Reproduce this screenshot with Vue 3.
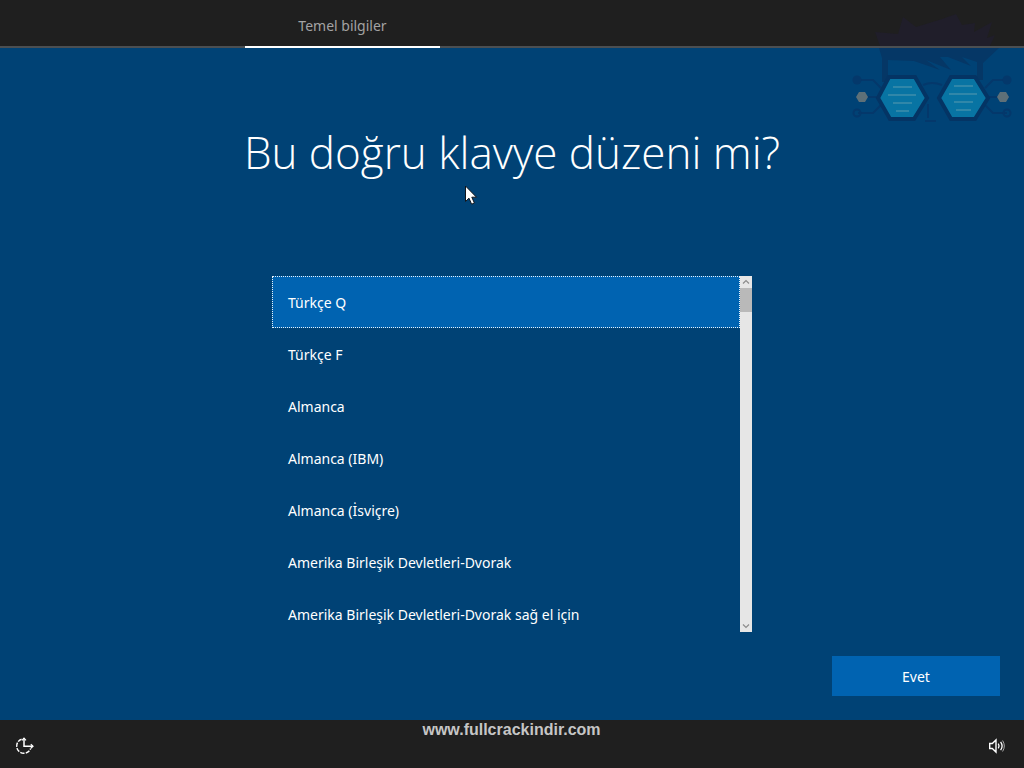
<script setup>
import { ref } from 'vue'

const layouts = [
  'Türkçe Q',
  'Türkçe F',
  'Almanca',
  'Almanca (IBM)',
  'Almanca (İsviçre)',
  'Amerika Birleşik Devletleri-Dvorak',
  'Amerika Birleşik Devletleri-Dvorak sağ el için',
]
const selected = ref(0)
</script>

<template>
  <div class="setup">
    <header class="topbar">
      <div class="tab">Temel bilgiler</div>
    </header>

    <main class="content">
      <h1>Bu doğru klavye düzeni mi?</h1>

      <div class="picker">
        <div class="options" role="listbox" aria-label="Klavye düzeni">
          <button
            v-for="(name, i) in layouts"
            :key="name"
            type="button"
            role="option"
            class="option"
            :class="{ selected: i === selected }"
            :aria-selected="i === selected"
            @click="selected = i"
          >{{ name }}</button>
        </div>
        <div class="scrollbar">
          <button type="button" class="arrow" aria-label="Yukarı kaydır">
            <svg width="8" height="6" viewBox="0 0 8 6"><path d="M1 4.5 4 1.5 7 4.5" /></svg>
          </button>
          <div class="thumb"></div>
          <button type="button" class="arrow end" aria-label="Aşağı kaydır">
            <svg width="8" height="6" viewBox="0 0 8 6"><path d="M1 1.5 4 4.5 7 1.5" /></svg>
          </button>
        </div>
      </div>

      <div class="actions">
        <button type="button" class="primary">Evet</button>
      </div>
    </main>

    <footer class="bottombar">
      <button type="button" class="icon" aria-label="Erişim kolaylığı">
        <svg width="20" height="20" viewBox="0 0 20 20" fill="none" stroke="#fff" stroke-width="1.5">
          <path d="M6.6 3.2A7.2 7.2 0 1 0 15.6 12.6" stroke-dasharray="4.2 1.3" />
          <path d="M9 2v8.2h9" />
          <path d="M7 4.4 9 2.2l2 2.2M15.8 8.2l2.2 2-2.2 2" stroke-width="1.2" />
        </svg>
      </button>
      <span class="site">www.fullcrackindir.com</span>
      <button type="button" class="icon" aria-label="Ses düzeyi">
        <svg width="18" height="16" viewBox="0 0 18 16" fill="none" stroke="#fff" stroke-width="1.4">
          <path d="M1.7 5.5h2.6L8 2v12l-3.7-3.5H1.7z" />
          <path d="M10.3 5.6q1.5 2.4 0 4.8M12.6 3.800q3 4.200 0 8.400" stroke-width="1.3" />
          <path d="M14.600 2.500q3.400 5.500 0 11" stroke="#aaa" stroke-width="1" />
        </svg>
      </button>
    </footer>

    <svg class="logo" width="180" height="130" viewBox="0 0 180 130" aria-hidden="true">
      <path fill="#201e2a" d="M36 46 31 32 54 34 59 17 72 27 98 19 112 14 118 25 131 23 130 32 148 22 143 38 151 35 146 46z" />
      <path fill="#053766" d="M35 48H155L139 63V80H133V62L118 57 127 66 104 57 96 57 107 70 82 60 96 70 70 61 44 60V82H38V58z" />
      <g fill="none" stroke="#04386b" stroke-width="2">
        <path d="M14 80H29L37 88M24 97H35M14 113H29L37 105M163 80H149L141 88M155 97H142M163 113H149L141 105" />
        <path d="M79 85Q88 81 98 85M84 104V118M92 121H81" />
        <circle cx="13" cy="113" r="3.5" />
        <circle cx="163" cy="113" r="3.5" />
      </g>
      <g fill="#04386b">
        <circle cx="13" cy="80" r="4.5" />
        <circle cx="163" cy="80" r="4.5" />
      </g>
      <g fill="#0874a3" stroke="#043464" stroke-width="4">
        <path d="M45 77H71L83 98 70 119H46L34 98z" />
        <path d="M107 77H131L144 98 131 119H107L95 98z" />
      </g>
      <g stroke="#3e8dac" stroke-width="1.5">
        <path d="M49 87H68M44 95H72M49 103H68M52 111H65M110 86H129M105 94H133M110 102H129M112 110H127" />
      </g>
      <g fill="#5e7078">
        <path d="M15 92h6l3 5-3 5h-6l-3-5zM156 92h6l3 5-3 5h-6l-3-5z" />
      </g>
    </svg>

    <svg class="cursor" width="15" height="22" viewBox="0 0 15 22" aria-hidden="true">
      <path d="M1.5 1V16.5L5 13.2 7.6 19.2 10.4 18 7.8 12.2H12.5z" fill="#fff" stroke="#10151c" stroke-width="1" />
    </svg>
  </div>
</template>

<style>
body {
  background: #004275;
}
</style>

<style scoped>
.setup {
  position: relative;
  display: flex;
  flex-direction: column;
  min-height: 100vh;
  background: #004275;
  color: #fff;
  font-family: "Noto Sans", "Open Sans", sans-serif;
  font-size: 14px;
  line-height: 20px;
}

button {
  margin: 0;
  border: 0;
  border-radius: 0;
  padding: 0;
  background: none;
  color: inherit;
  font: inherit;
}

.topbar {
  display: flex;
  height: 48px;
  box-sizing: border-box;
  padding-left: 245px;
  background: linear-gradient(#4b4f52, #4b4f52) bottom / 100% 2px no-repeat #1f1f1f;
}

.tab {
  box-sizing: border-box;
  width: 195px;
  padding-top: 16px;
  border-bottom: 2px solid #fff;
  color: #a3a3a3;
  text-align: center;
}

.content {
  flex: 1;
  display: flex;
  flex-direction: column;
  align-items: center;
}

h1 {
  margin: 72px 0 92px;
  font-family: "Open Sans", sans-serif;
  font-size: 44px;
  font-weight: 300;
  line-height: 64px;
}

.picker {
  display: flex;
  width: 480px;
  max-width: 100%;
  height: 356px;
}

.options {
  flex: 1;
  overflow: hidden;
}

.option {
  display: block;
  box-sizing: border-box;
  width: 100%;
  height: 52px;
  padding: 2px 15px 0;
  border: 1px solid transparent;
  text-align: left;
}

.option.selected {
  border: 1px dotted #e8f2fa;
  background: #0063b1;
}

.scrollbar {
  display: flex;
  flex-direction: column;
  width: 12px;
  background: #e6e6e6;
}

.arrow {
  display: flex;
  align-items: center;
  justify-content: center;
  height: 12px;
}

.arrow path {
  fill: none;
  stroke: #8c8c8c;
  stroke-width: 1.2;
}

.arrow.end {
  margin-top: auto;
}

.thumb {
  height: 24px;
  background: #b9b9b9;
}

.actions {
  align-self: stretch;
  display: flex;
  justify-content: flex-end;
  padding: 24px;
}

.primary {
  width: 168px;
  height: 40px;
  padding-top: 2px;
  background: #0063b1;
}

.bottombar {
  display: flex;
  align-items: center;
  justify-content: space-between;
  height: 48px;
  padding: 0 18px 0 15px;
  background: #1f1f1f;
}

.icon {
  display: flex;
  align-items: center;
  height: 48px;
  padding-top: 4px;
  box-sizing: border-box;
}

.site {
  align-self: flex-start;
  color: #c6c6c6;
  font-family: "Liberation Sans", Arial, sans-serif;
  font-size: 16px;
  font-weight: 700;
}

.logo {
  position: absolute;
  top: 0;
  right: 0;
}

.cursor {
  position: absolute;
  top: 185px;
  left: 464px;
}
</style>
